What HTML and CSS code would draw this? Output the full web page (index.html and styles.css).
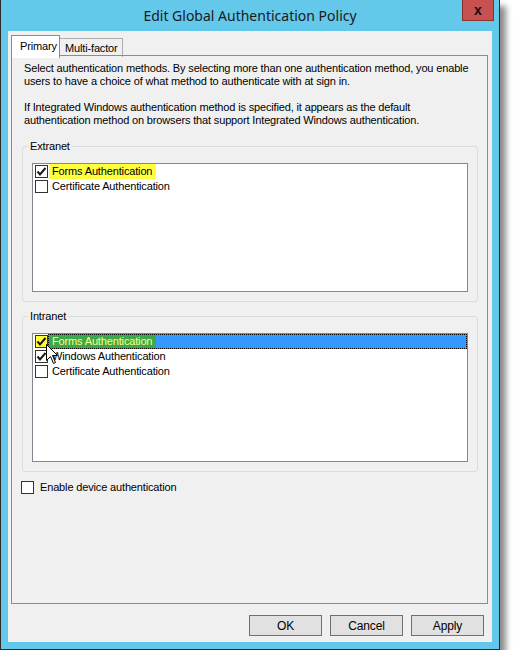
FILE: index.html
```html
<!DOCTYPE html>
<html lang="en">
<head>
    <meta charset="UTF-8">
    <meta name="viewport" content="width=device-width, initial-scale=1.0">
    <title>Edit Global Authentication Policy</title>
    <link rel="stylesheet" href="styles.css">
</head>
<body>
    <div class="window">
        <!-- Barra de título -->
        <div class="titlebar">
            <span class="title">Edit Global Authentication Policy</span>
            <button class="close-btn">x</button>
        </div>

        <div class="client">
            <!-- Pestañas -->
            <div class="tabs">
                <div class="tab active">Primary</div>
                <div class="tab">Multi-factor</div>
            </div>

            <div class="tab-page">
                <p class="intro">Select authentication methods. By selecting more than one authentication method, you enable users to have a choice of what method to authenticate with at sign in.</p>
                <p class="intro">If Integrated Windows authentication method is specified, it appears as the default authentication method on browsers that support Integrated Windows authentication.</p>

                <fieldset class="group">
                    <legend>Extranet</legend>
                    <div class="listbox">
                        <div class="item">
                            <span class="check checked"><svg width="11" height="11" viewBox="0 0 11 11"><path d="M1.5 5.5 L4 8.5 L9.5 2" fill="none" stroke="#1a1a1a" stroke-width="2"/></svg></span>
                            <span class="text"><span class="hl-yellow">Forms Authentication</span></span>
                        </div>
                        <div class="item">
                            <span class="check"></span>
                            <span class="text"><span class="plain">Certificate Authentication</span></span>
                        </div>
                    </div>
                </fieldset>

                <fieldset class="group intranet">
                    <legend>Intranet</legend>
                    <div class="listbox">
                        <div class="item selected">
                            <span class="check checked marked"><svg width="11" height="11" viewBox="0 0 11 11"><path d="M1.5 5.5 L4 8.5 L9.5 2" fill="none" stroke="#1a1a1a" stroke-width="2"/></svg></span>
                            <span class="text"><span class="hl-green">Forms Authentication</span></span>
                        </div>
                        <div class="item">
                            <span class="check checked"><svg width="11" height="11" viewBox="0 0 11 11"><path d="M1.5 5.5 L4 8.5 L9.5 2" fill="none" stroke="#1a1a1a" stroke-width="2"/></svg></span>
                            <span class="text"><span class="plain">Windows Authentication</span></span>
                        </div>
                        <div class="item">
                            <span class="check"></span>
                            <span class="text"><span class="plain">Certificate Authentication</span></span>
                        </div>
                    </div>
                </fieldset>

                <div class="device">
                    <span class="check"></span>
                    <span>Enable device authentication</span>
                </div>
            </div>

            <!-- Botones -->
            <div class="buttons">
                <button class="btn">OK</button>
                <button class="btn">Cancel</button>
                <button class="btn">Apply</button>
            </div>
        </div>

        <!-- Puntero del ratón -->
        <svg class="cursor" width="13" height="21" viewBox="0 0 13 21">
            <path d="M0.5 0.5 L0.5 16.5 L4.5 12.5 L7.5 19.5 L9.5 18.5 L6.5 11.5 L11.5 11.5 Z" fill="#fff" stroke="#000" stroke-width="1"/>
        </svg>
    </div>
</body>
</html>
```

FILE: styles.css
```css
* {
    margin: 0;
    padding: 0;
    box-sizing: border-box;
}

body {
    font-family: 'Liberation Sans', Arial, sans-serif;
    font-size: 11px;
    line-height: 13px;
    letter-spacing: -0.15px;
    color: #000;
    background-color: #fff;
}

.window {
    position: relative;
    width: 500px;
    height: 650px;
    background-color: #63c8ea;
    border: 1px solid #2b2b2b;
    border-top: none;
    box-shadow: 6px 6px 6px rgba(0, 0, 0, 0.45);
    display: flex;
    flex-direction: column;
}

.titlebar {
    height: 31px;
    display: flex;
    justify-content: center;
    align-items: center;
}

.title {
    font-family: 'Noto Sans', sans-serif;
    font-size: 14px;
    line-height: 18px;
    letter-spacing: 0;
    color: #1a1a1a;
    margin-top: 1px;
}

.close-btn {
    position: absolute;
    top: 0;
    right: 5px;
    width: 32px;
    height: 21px;
    background-color: #c75050;
    border: 1px solid #8a3030;
    border-top: none;
    color: #111;
    font-family: 'Liberation Sans', sans-serif;
    font-weight: bold;
    font-size: 14px;
    line-height: 16px;
}

.client {
    flex: 1;
    margin: 0 7px 7px 7px;
    background-color: #f0f0f0;
    display: flex;
    flex-direction: column;
}

.tabs {
    display: flex;
    align-items: flex-end;
    height: 24px;
    padding-left: 3px;
    margin-top: 2px;
}

.tab {
    height: 19px;
    padding: 3px 4px 0 5px;
    background-color: #f0f0f0;
    border: 1px solid #adadad;
    border-bottom: none;
    border-left: none;
}

.tab.active {
    position: relative;
    z-index: 1;
    height: 23px;
    width: 49px;
    padding: 4px 0 0 8px;
    background-color: #fff;
    border-left: 1px solid #898c95;
    border-color: #898c95;
    margin-bottom: -1px;
}

.tab-page {
    height: 549px;
    margin: -2px 4px 0 3px;
    border: 1px solid #898c95;
    padding: 6px 9px 0 10px;
}

.intro {
    padding: 0 2px;
    margin-bottom: 13px;
}

.group {
    border: 1px solid #dcdcdc;
    border-radius: 3px;
    padding: 10px 9px 9px 9px;
    margin-bottom: 8px;
}

.group legend {
    margin-left: -4px;
    padding: 0 2px;
}

.listbox {
    height: 129px;
    background-color: #fff;
    border: 1px solid #828790;
    padding: 0 0 0 2px;
}

.item {
    display: flex;
    align-items: center;
    height: 15px;
}

.check {
    width: 13px;
    height: 13px;
    border: 1px solid #333;
    background-color: #fff;
    display: flex;
    align-items: center;
    justify-content: center;
    flex-shrink: 0;
}

.check.marked {
    background-color: #ffff40;
}

.item .text {
    flex: 1;
    height: 15px;
    padding-left: 1px;
    display: flex;
}

.item .text span {
    padding: 1px 4px 0 3px;
}

.hl-yellow {
    background-color: #ffff40;
}

.item.selected .text {
    background-color: #3399ff;
    outline: 1px dotted #000;
    outline-offset: -1px;
}

.hl-green {
    background-color: #3ca84a;
    color: #ffff80;
}

.device {
    display: flex;
    align-items: center;
    gap: 6px;
    height: 15px;
    margin-left: -1px;
}

.buttons {
    display: flex;
    justify-content: flex-end;
    gap: 8px;
    padding-right: 8px;
    margin-top: 11px;
}

.btn {
    width: 73px;
    height: 21px;
    background-color: #e1e1e1;
    border: 1px solid #707070;
    font-family: 'Liberation Sans', Arial, sans-serif;
    font-size: 12px;
    letter-spacing: -0.15px;
    color: #000;
}

.cursor {
    position: absolute;
    left: 45px;
    top: 344px;
}
```
